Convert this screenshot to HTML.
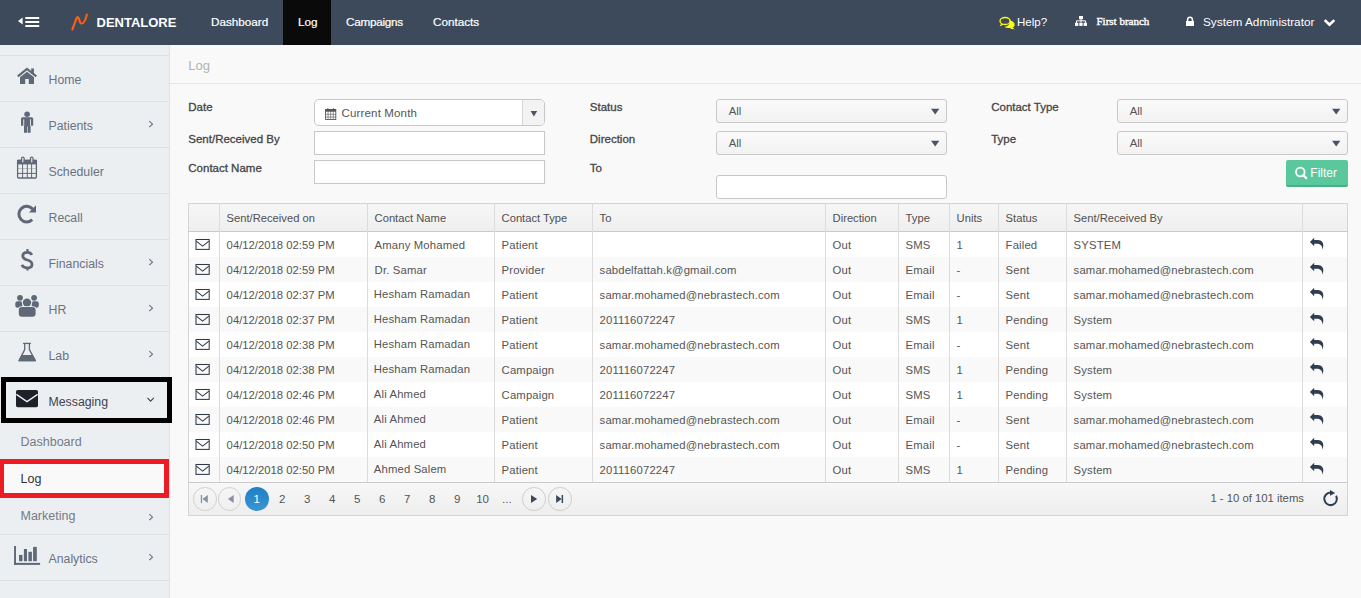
<!DOCTYPE html>
<html><head><meta charset="utf-8"><style>
html,body{margin:0;padding:0;}
body{width:1361px;height:598px;overflow:hidden;position:relative;background:#f9f9f9;font-family:"Liberation Sans",sans-serif;}
.t{position:absolute;white-space:nowrap;line-height:20px;}
svg{position:absolute;overflow:visible}
</style></head><body>
<div style="position:absolute;left:0px;top:0px;width:1361px;height:45px;background:#3d4a5c"></div>
<div style="position:absolute;left:283px;top:0px;width:48px;height:45px;background:#0a0a0a"></div>
<div class="t" style="left:211px;top:12.45px;font-size:11.7px;color:#ffffff;-webkit-text-stroke:0.2px #ffffff;">Dashboard</div>
<div class="t" style="left:298px;top:12.45px;font-size:11.7px;color:#ffffff;-webkit-text-stroke:0.2px #ffffff;">Log</div>
<div class="t" style="left:346px;top:12.45px;font-size:11.7px;color:#ffffff;letter-spacing:-0.25px;-webkit-text-stroke:0.2px #ffffff;">Campaigns</div>
<div class="t" style="left:433px;top:12.45px;font-size:11.7px;color:#ffffff;-webkit-text-stroke:0.2px #ffffff;">Contacts</div>
<div class="t" style="left:96.5px;top:12.50px;font-size:13px;color:#ffffff;font-weight:700;">DENTALORE</div>
<div class="t" style="left:1017px;top:11.62px;font-size:11.5px;color:#ffffff;">Help?</div>
<div class="t" style="left:1096.5px;top:11.29px;font-size:11px;color:#ffffff;font-family:'Liberation Serif',serif;-webkit-text-stroke:0.4px #ffffff;">First branch</div>
<div class="t" style="left:1203px;top:12.41px;font-size:11.8px;color:#ffffff;">System Administrator</div>
<div style="position:absolute;left:0px;top:45px;width:169px;height:553px;background:#eceff1"></div>
<div style="position:absolute;left:170px;top:45px;width:1191px;height:553px;background:#f9f9f9"></div>
<div style="position:absolute;left:169px;top:45px;width:1px;height:553px;background:#dfe3e6"></div>
<div style="position:absolute;left:0px;top:55px;width:169px;height:1px;background:#dde1e4"></div>
<div style="position:absolute;left:0px;top:101px;width:169px;height:1px;background:#dde1e4"></div>
<div style="position:absolute;left:0px;top:147px;width:169px;height:1px;background:#dde1e4"></div>
<div style="position:absolute;left:0px;top:193px;width:169px;height:1px;background:#dde1e4"></div>
<div style="position:absolute;left:0px;top:239px;width:169px;height:1px;background:#dde1e4"></div>
<div style="position:absolute;left:0px;top:285px;width:169px;height:1px;background:#dde1e4"></div>
<div style="position:absolute;left:0px;top:331px;width:169px;height:1px;background:#dde1e4"></div>
<div style="position:absolute;left:0px;top:377px;width:169px;height:1px;background:#dde1e4"></div>
<div style="position:absolute;left:0px;top:534px;width:169px;height:1px;background:#dde1e4"></div>
<div style="position:absolute;left:0px;top:580px;width:169px;height:1px;background:#dde1e4"></div>
<div class="t" style="left:48.5px;top:69.74px;font-size:12.3px;color:#6a7382;">Home</div>
<div class="t" style="left:48.5px;top:115.74px;font-size:12.3px;color:#6a7382;">Patients</div>
<div class="t" style="left:48.5px;top:161.74px;font-size:12.3px;color:#6a7382;">Scheduler</div>
<div class="t" style="left:48.5px;top:207.74px;font-size:12.3px;color:#6a7382;">Recall</div>
<div class="t" style="left:48.5px;top:253.74px;font-size:12.3px;color:#6a7382;">Financials</div>
<div class="t" style="left:48.5px;top:299.74px;font-size:12.3px;color:#6a7382;">HR</div>
<div class="t" style="left:48.5px;top:345.74px;font-size:12.3px;color:#6a7382;">Lab</div>
<div class="t" style="left:48.5px;top:391.74px;font-size:12.3px;color:#3d4250;">Messaging</div>
<div class="t" style="left:20.5px;top:431.67px;font-size:12.5px;color:#747b87;">Dashboard</div>
<div style="position:absolute;left:0px;top:459px;width:169px;height:39px;background:#f9f9f9"></div>
<div class="t" style="left:20.5px;top:468.67px;font-size:12.5px;color:#333333;">Log</div>
<div class="t" style="left:20.5px;top:505.67px;font-size:12.5px;color:#747b87;">Marketing</div>
<div class="t" style="left:48.5px;top:548.74px;font-size:12.3px;color:#6a7382;">Analytics</div>
<div style="position:absolute;left:1px;top:377px;width:171px;height:46px;box-sizing:border-box;border:5px solid #000"></div>
<div style="position:absolute;left:0px;top:459px;width:169px;height:39px;box-sizing:border-box;border:5px solid #ec1b24;border-left-width:4px"></div>
<div class="t" style="left:188.3px;top:55.50px;font-size:13px;color:#b3b3b3;">Log</div>
<div style="position:absolute;left:170px;top:83px;width:1191px;height:1px;background:#e6e6e6"></div>
<div class="t" style="left:188.3px;top:97.02px;font-size:11.5px;color:#454545;-webkit-text-stroke:0.3px #454545;">Date</div>
<div class="t" style="left:188.3px;top:129.02px;font-size:11.5px;color:#454545;-webkit-text-stroke:0.3px #454545;">Sent/Received By</div>
<div class="t" style="left:188.3px;top:158.02px;font-size:11.5px;color:#454545;-webkit-text-stroke:0.3px #454545;">Contact Name</div>
<div class="t" style="left:589.8px;top:97.02px;font-size:11.5px;color:#454545;-webkit-text-stroke:0.3px #454545;">Status</div>
<div class="t" style="left:589.8px;top:129.02px;font-size:11.5px;color:#454545;-webkit-text-stroke:0.3px #454545;">Direction</div>
<div class="t" style="left:589.8px;top:158.02px;font-size:11.5px;color:#454545;-webkit-text-stroke:0.3px #454545;">To</div>
<div class="t" style="left:991.2px;top:97.02px;font-size:11.5px;color:#454545;-webkit-text-stroke:0.3px #454545;">Contact Type</div>
<div class="t" style="left:991.2px;top:129.02px;font-size:11.5px;color:#454545;-webkit-text-stroke:0.3px #454545;">Type</div>
<div style="position:absolute;left:314px;top:99px;width:231px;height:27px;box-sizing:border-box;border:1px solid #c8c8c8;border-radius:5px;background:#fff"></div>
<div style="position:absolute;left:522px;top:100px;width:21px;height:25px;border-left:1px solid #d6d6d6;background:#f3f3f3;border-radius:0 4px 4px 0"></div>
<div class="t" style="left:341.6px;top:103.22px;font-size:11.5px;color:#555;letter-spacing:0.15px;">Current Month</div>
<div style="position:absolute;left:314px;top:131px;width:231px;height:24px;box-sizing:border-box;border:1px solid #c8c8c8;background:#fff"></div>
<div style="position:absolute;left:314px;top:160px;width:231px;height:24px;box-sizing:border-box;border:1px solid #c8c8c8;background:#fff"></div>
<div style="position:absolute;left:716px;top:99px;width:231px;height:24px;box-sizing:border-box;border:1px solid #c8c8c8;border-radius:3px;background:linear-gradient(#fafafa,#f2f2f2)"></div>
<div class="t" style="left:728.8px;top:100.78px;font-size:11.3px;color:#555;">All</div>
<div style="position:absolute;left:716px;top:131px;width:231px;height:24px;box-sizing:border-box;border:1px solid #c8c8c8;border-radius:3px;background:linear-gradient(#fafafa,#f2f2f2)"></div>
<div class="t" style="left:728.8px;top:132.78px;font-size:11.3px;color:#555;">All</div>
<div style="position:absolute;left:1117px;top:99px;width:231px;height:24px;box-sizing:border-box;border:1px solid #c8c8c8;border-radius:3px;background:linear-gradient(#fafafa,#f2f2f2)"></div>
<div class="t" style="left:1129.8px;top:100.78px;font-size:11.3px;color:#555;">All</div>
<div style="position:absolute;left:1117px;top:131px;width:231px;height:24px;box-sizing:border-box;border:1px solid #c8c8c8;border-radius:3px;background:linear-gradient(#fafafa,#f2f2f2)"></div>
<div class="t" style="left:1129.8px;top:132.78px;font-size:11.3px;color:#555;">All</div>
<div style="position:absolute;left:716px;top:175px;width:231px;height:24px;box-sizing:border-box;border:1px solid #c8c8c8;border-radius:3px;background:#fff"></div>
<div style="position:absolute;left:1286px;top:160px;width:62px;height:27px;box-sizing:border-box;background:#5bc79c;border-bottom:2px solid #47b186;border-radius:2px"></div>
<div class="t" style="left:1310.3px;top:163.24px;font-size:12px;color:#fff;">Filter</div>
<div style="position:absolute;left:188px;top:203px;width:1160px;height:313px;box-sizing:border-box;border:1px solid #d5d5d5;background:#fff"></div>
<div style="position:absolute;left:189px;top:204px;width:1158px;height:27px;background:linear-gradient(#f6f6f6,#efefef)"></div>
<div style="position:absolute;left:188px;top:231px;width:1160px;height:1px;background:#c9c9ce"></div>
<div style="position:absolute;left:189px;top:257px;width:1158px;height:25px;background:#f9f9f9"></div>
<div style="position:absolute;left:189px;top:307px;width:1158px;height:25px;background:#f9f9f9"></div>
<div style="position:absolute;left:189px;top:357px;width:1158px;height:25px;background:#f9f9f9"></div>
<div style="position:absolute;left:189px;top:407px;width:1158px;height:25px;background:#f9f9f9"></div>
<div style="position:absolute;left:189px;top:457px;width:1158px;height:25px;background:#f9f9f9"></div>
<div style="position:absolute;left:219px;top:204px;width:1px;height:278px;background:#dcdcdc"></div>
<div style="position:absolute;left:367px;top:204px;width:1px;height:278px;background:#dcdcdc"></div>
<div style="position:absolute;left:494px;top:204px;width:1px;height:278px;background:#dcdcdc"></div>
<div style="position:absolute;left:592px;top:204px;width:1px;height:278px;background:#dcdcdc"></div>
<div style="position:absolute;left:825px;top:204px;width:1px;height:278px;background:#dcdcdc"></div>
<div style="position:absolute;left:898px;top:204px;width:1px;height:278px;background:#dcdcdc"></div>
<div style="position:absolute;left:949px;top:204px;width:1px;height:278px;background:#dcdcdc"></div>
<div style="position:absolute;left:998px;top:204px;width:1px;height:278px;background:#dcdcdc"></div>
<div style="position:absolute;left:1066px;top:204px;width:1px;height:278px;background:#dcdcdc"></div>
<div style="position:absolute;left:1302px;top:204px;width:1px;height:278px;background:#dcdcdc"></div>
<div class="t" style="left:226.6px;top:208.12px;font-size:11.2px;color:#505050;">Sent/Received on</div>
<div class="t" style="left:374.6px;top:208.12px;font-size:11.2px;color:#505050;">Contact Name</div>
<div class="t" style="left:501.6px;top:208.12px;font-size:11.2px;color:#505050;">Contact Type</div>
<div class="t" style="left:599.6px;top:208.12px;font-size:11.2px;color:#505050;">To</div>
<div class="t" style="left:832.6px;top:208.12px;font-size:11.2px;color:#505050;">Direction</div>
<div class="t" style="left:905.6px;top:208.12px;font-size:11.2px;color:#505050;">Type</div>
<div class="t" style="left:956.6px;top:208.12px;font-size:11.2px;color:#505050;">Units</div>
<div class="t" style="left:1005.6px;top:208.12px;font-size:11.2px;color:#505050;">Status</div>
<div class="t" style="left:1073.6px;top:208.12px;font-size:11.2px;color:#505050;">Sent/Received By</div>
<div class="t" style="left:226.6px;top:234.88px;font-size:11.3px;color:#555555;">04/12/2018 02:59 PM</div>
<div class="t" style="left:374.6px;top:234.88px;font-size:11.3px;color:#555555;letter-spacing:0.15px;">Amany Mohamed</div>
<div class="t" style="left:501.6px;top:234.88px;font-size:11.3px;color:#555555;letter-spacing:0.15px;">Patient</div>
<div class="t" style="left:832.6px;top:234.88px;font-size:11.3px;color:#555555;letter-spacing:0.15px;">Out</div>
<div class="t" style="left:905.6px;top:234.88px;font-size:11.3px;color:#555555;letter-spacing:0.15px;">SMS</div>
<div class="t" style="left:956.6px;top:234.88px;font-size:11.3px;color:#555555;letter-spacing:0.15px;">1</div>
<div class="t" style="left:1005.6px;top:234.88px;font-size:11.3px;color:#555555;letter-spacing:0.15px;">Failed</div>
<div class="t" style="left:1073.6px;top:234.88px;font-size:11.3px;color:#555555;letter-spacing:0.15px;">SYSTEM</div>
<div class="t" style="left:226.6px;top:259.88px;font-size:11.3px;color:#555555;">04/12/2018 02:59 PM</div>
<div class="t" style="left:374.6px;top:259.88px;font-size:11.3px;color:#555555;letter-spacing:0.15px;">Dr. Samar</div>
<div class="t" style="left:501.6px;top:259.88px;font-size:11.3px;color:#555555;letter-spacing:0.15px;">Provider</div>
<div class="t" style="left:599.6px;top:259.88px;font-size:11.3px;color:#555555;letter-spacing:0.15px;">sabdelfattah.k@gmail.com</div>
<div class="t" style="left:832.6px;top:259.88px;font-size:11.3px;color:#555555;letter-spacing:0.15px;">Out</div>
<div class="t" style="left:905.6px;top:259.88px;font-size:11.3px;color:#555555;letter-spacing:0.15px;">Email</div>
<div class="t" style="left:956.6px;top:259.88px;font-size:11.3px;color:#555555;letter-spacing:0.15px;">-</div>
<div class="t" style="left:1005.6px;top:259.88px;font-size:11.3px;color:#555555;letter-spacing:0.15px;">Sent</div>
<div class="t" style="left:1073.6px;top:259.88px;font-size:11.3px;color:#555555;letter-spacing:0.15px;">samar.mohamed@nebrastech.com</div>
<div class="t" style="left:226.6px;top:284.88px;font-size:11.3px;color:#555555;">04/12/2018 02:37 PM</div>
<div class="t" style="left:373.8px;top:284.18px;font-size:11.3px;color:#555555;letter-spacing:0.15px;">Hesham Ramadan</div>
<div class="t" style="left:501.6px;top:284.88px;font-size:11.3px;color:#555555;letter-spacing:0.15px;">Patient</div>
<div class="t" style="left:599.6px;top:284.88px;font-size:11.3px;color:#555555;letter-spacing:0.15px;">samar.mohamed@nebrastech.com</div>
<div class="t" style="left:832.6px;top:284.88px;font-size:11.3px;color:#555555;letter-spacing:0.15px;">Out</div>
<div class="t" style="left:905.6px;top:284.88px;font-size:11.3px;color:#555555;letter-spacing:0.15px;">Email</div>
<div class="t" style="left:956.6px;top:284.88px;font-size:11.3px;color:#555555;letter-spacing:0.15px;">-</div>
<div class="t" style="left:1005.6px;top:284.88px;font-size:11.3px;color:#555555;letter-spacing:0.15px;">Sent</div>
<div class="t" style="left:1073.6px;top:284.88px;font-size:11.3px;color:#555555;letter-spacing:0.15px;">samar.mohamed@nebrastech.com</div>
<div class="t" style="left:226.6px;top:309.88px;font-size:11.3px;color:#555555;">04/12/2018 02:37 PM</div>
<div class="t" style="left:373.8px;top:309.18px;font-size:11.3px;color:#555555;letter-spacing:0.15px;">Hesham Ramadan</div>
<div class="t" style="left:501.6px;top:309.88px;font-size:11.3px;color:#555555;letter-spacing:0.15px;">Patient</div>
<div class="t" style="left:599.6px;top:309.88px;font-size:11.3px;color:#555555;letter-spacing:0.15px;">201116072247</div>
<div class="t" style="left:832.6px;top:309.88px;font-size:11.3px;color:#555555;letter-spacing:0.15px;">Out</div>
<div class="t" style="left:905.6px;top:309.88px;font-size:11.3px;color:#555555;letter-spacing:0.15px;">SMS</div>
<div class="t" style="left:956.6px;top:309.88px;font-size:11.3px;color:#555555;letter-spacing:0.15px;">1</div>
<div class="t" style="left:1005.6px;top:309.88px;font-size:11.3px;color:#555555;letter-spacing:0.15px;">Pending</div>
<div class="t" style="left:1073.6px;top:309.88px;font-size:11.3px;color:#555555;letter-spacing:0.15px;">System</div>
<div class="t" style="left:226.6px;top:334.88px;font-size:11.3px;color:#555555;">04/12/2018 02:38 PM</div>
<div class="t" style="left:373.8px;top:334.18px;font-size:11.3px;color:#555555;letter-spacing:0.15px;">Hesham Ramadan</div>
<div class="t" style="left:501.6px;top:334.88px;font-size:11.3px;color:#555555;letter-spacing:0.15px;">Patient</div>
<div class="t" style="left:599.6px;top:334.88px;font-size:11.3px;color:#555555;letter-spacing:0.15px;">samar.mohamed@nebrastech.com</div>
<div class="t" style="left:832.6px;top:334.88px;font-size:11.3px;color:#555555;letter-spacing:0.15px;">Out</div>
<div class="t" style="left:905.6px;top:334.88px;font-size:11.3px;color:#555555;letter-spacing:0.15px;">Email</div>
<div class="t" style="left:956.6px;top:334.88px;font-size:11.3px;color:#555555;letter-spacing:0.15px;">-</div>
<div class="t" style="left:1005.6px;top:334.88px;font-size:11.3px;color:#555555;letter-spacing:0.15px;">Sent</div>
<div class="t" style="left:1073.6px;top:334.88px;font-size:11.3px;color:#555555;letter-spacing:0.15px;">samar.mohamed@nebrastech.com</div>
<div class="t" style="left:226.6px;top:359.88px;font-size:11.3px;color:#555555;">04/12/2018 02:38 PM</div>
<div class="t" style="left:373.8px;top:359.18px;font-size:11.3px;color:#555555;letter-spacing:0.15px;">Hesham Ramadan</div>
<div class="t" style="left:501.6px;top:359.88px;font-size:11.3px;color:#555555;letter-spacing:0.15px;">Campaign</div>
<div class="t" style="left:599.6px;top:359.88px;font-size:11.3px;color:#555555;letter-spacing:0.15px;">201116072247</div>
<div class="t" style="left:832.6px;top:359.88px;font-size:11.3px;color:#555555;letter-spacing:0.15px;">Out</div>
<div class="t" style="left:905.6px;top:359.88px;font-size:11.3px;color:#555555;letter-spacing:0.15px;">SMS</div>
<div class="t" style="left:956.6px;top:359.88px;font-size:11.3px;color:#555555;letter-spacing:0.15px;">1</div>
<div class="t" style="left:1005.6px;top:359.88px;font-size:11.3px;color:#555555;letter-spacing:0.15px;">Pending</div>
<div class="t" style="left:1073.6px;top:359.88px;font-size:11.3px;color:#555555;letter-spacing:0.15px;">System</div>
<div class="t" style="left:226.6px;top:384.88px;font-size:11.3px;color:#555555;">04/12/2018 02:46 PM</div>
<div class="t" style="left:373.8px;top:384.18px;font-size:11.3px;color:#555555;letter-spacing:0.15px;">Ali Ahmed</div>
<div class="t" style="left:501.6px;top:384.88px;font-size:11.3px;color:#555555;letter-spacing:0.15px;">Campaign</div>
<div class="t" style="left:599.6px;top:384.88px;font-size:11.3px;color:#555555;letter-spacing:0.15px;">201116072247</div>
<div class="t" style="left:832.6px;top:384.88px;font-size:11.3px;color:#555555;letter-spacing:0.15px;">Out</div>
<div class="t" style="left:905.6px;top:384.88px;font-size:11.3px;color:#555555;letter-spacing:0.15px;">SMS</div>
<div class="t" style="left:956.6px;top:384.88px;font-size:11.3px;color:#555555;letter-spacing:0.15px;">1</div>
<div class="t" style="left:1005.6px;top:384.88px;font-size:11.3px;color:#555555;letter-spacing:0.15px;">Pending</div>
<div class="t" style="left:1073.6px;top:384.88px;font-size:11.3px;color:#555555;letter-spacing:0.15px;">System</div>
<div class="t" style="left:226.6px;top:409.88px;font-size:11.3px;color:#555555;">04/12/2018 02:46 PM</div>
<div class="t" style="left:373.8px;top:409.18px;font-size:11.3px;color:#555555;letter-spacing:0.15px;">Ali Ahmed</div>
<div class="t" style="left:501.6px;top:409.88px;font-size:11.3px;color:#555555;letter-spacing:0.15px;">Patient</div>
<div class="t" style="left:599.6px;top:409.88px;font-size:11.3px;color:#555555;letter-spacing:0.15px;">samar.mohamed@nebrastech.com</div>
<div class="t" style="left:832.6px;top:409.88px;font-size:11.3px;color:#555555;letter-spacing:0.15px;">Out</div>
<div class="t" style="left:905.6px;top:409.88px;font-size:11.3px;color:#555555;letter-spacing:0.15px;">Email</div>
<div class="t" style="left:956.6px;top:409.88px;font-size:11.3px;color:#555555;letter-spacing:0.15px;">-</div>
<div class="t" style="left:1005.6px;top:409.88px;font-size:11.3px;color:#555555;letter-spacing:0.15px;">Sent</div>
<div class="t" style="left:1073.6px;top:409.88px;font-size:11.3px;color:#555555;letter-spacing:0.15px;">samar.mohamed@nebrastech.com</div>
<div class="t" style="left:226.6px;top:434.88px;font-size:11.3px;color:#555555;">04/12/2018 02:50 PM</div>
<div class="t" style="left:373.8px;top:434.18px;font-size:11.3px;color:#555555;letter-spacing:0.15px;">Ali Ahmed</div>
<div class="t" style="left:501.6px;top:434.88px;font-size:11.3px;color:#555555;letter-spacing:0.15px;">Patient</div>
<div class="t" style="left:599.6px;top:434.88px;font-size:11.3px;color:#555555;letter-spacing:0.15px;">samar.mohamed@nebrastech.com</div>
<div class="t" style="left:832.6px;top:434.88px;font-size:11.3px;color:#555555;letter-spacing:0.15px;">Out</div>
<div class="t" style="left:905.6px;top:434.88px;font-size:11.3px;color:#555555;letter-spacing:0.15px;">Email</div>
<div class="t" style="left:956.6px;top:434.88px;font-size:11.3px;color:#555555;letter-spacing:0.15px;">-</div>
<div class="t" style="left:1005.6px;top:434.88px;font-size:11.3px;color:#555555;letter-spacing:0.15px;">Sent</div>
<div class="t" style="left:1073.6px;top:434.88px;font-size:11.3px;color:#555555;letter-spacing:0.15px;">samar.mohamed@nebrastech.com</div>
<div class="t" style="left:226.6px;top:459.88px;font-size:11.3px;color:#555555;">04/12/2018 02:50 PM</div>
<div class="t" style="left:373.8px;top:459.18px;font-size:11.3px;color:#555555;letter-spacing:0.15px;">Ahmed Salem</div>
<div class="t" style="left:501.6px;top:459.88px;font-size:11.3px;color:#555555;letter-spacing:0.15px;">Patient</div>
<div class="t" style="left:599.6px;top:459.88px;font-size:11.3px;color:#555555;letter-spacing:0.15px;">201116072247</div>
<div class="t" style="left:832.6px;top:459.88px;font-size:11.3px;color:#555555;letter-spacing:0.15px;">Out</div>
<div class="t" style="left:905.6px;top:459.88px;font-size:11.3px;color:#555555;letter-spacing:0.15px;">SMS</div>
<div class="t" style="left:956.6px;top:459.88px;font-size:11.3px;color:#555555;letter-spacing:0.15px;">1</div>
<div class="t" style="left:1005.6px;top:459.88px;font-size:11.3px;color:#555555;letter-spacing:0.15px;">Pending</div>
<div class="t" style="left:1073.6px;top:459.88px;font-size:11.3px;color:#555555;letter-spacing:0.15px;">System</div>
<div style="position:absolute;left:189px;top:483px;width:1158px;height:32px;background:linear-gradient(#f7f7f7,#eeeeee)"></div>
<div style="position:absolute;left:188px;top:482px;width:1160px;height:1px;background:#c9c9ce"></div>
<div style="position:absolute;left:193.3px;top:487.3px;width:23.4px;height:23.4px;box-sizing:border-box;border:1px solid #d0d0d0;border-radius:50%"></div>
<div style="position:absolute;left:218.10000000000002px;top:487.3px;width:23.4px;height:23.4px;box-sizing:border-box;border:1px solid #d0d0d0;border-radius:50%"></div>
<div style="position:absolute;left:522.3px;top:487.3px;width:23.4px;height:23.4px;box-sizing:border-box;border:1px solid #cccccc;border-radius:50%"></div>
<div style="position:absolute;left:548.3px;top:487.3px;width:23.4px;height:23.4px;box-sizing:border-box;border:1px solid #cccccc;border-radius:50%"></div>
<div style="position:absolute;left:245px;top:487px;width:24px;height:24px;border-radius:50%;background:linear-gradient(#1f7fc4,#3a95d3)"></div>
<div class="t" style="left:253.5px;top:489.02px;font-size:11.5px;color:#fff;">1</div>
<div class="t" style="left:279.0px;top:489.02px;font-size:11.5px;color:#555;">2</div>
<div class="t" style="left:304.0px;top:489.02px;font-size:11.5px;color:#555;">3</div>
<div class="t" style="left:329.0px;top:489.02px;font-size:11.5px;color:#555;">4</div>
<div class="t" style="left:354.0px;top:489.02px;font-size:11.5px;color:#555;">5</div>
<div class="t" style="left:379.0px;top:489.02px;font-size:11.5px;color:#555;">6</div>
<div class="t" style="left:404.0px;top:489.02px;font-size:11.5px;color:#555;">7</div>
<div class="t" style="left:429.0px;top:489.02px;font-size:11.5px;color:#555;">8</div>
<div class="t" style="left:454.0px;top:489.02px;font-size:11.5px;color:#555;">9</div>
<div class="t" style="left:476.2px;top:489.02px;font-size:11.5px;color:#555;">10</div>
<div class="t" style="left:502px;top:489.02px;font-size:11.5px;color:#555;">...</div>
<div class="t" style="left:1210.4px;top:488.08px;font-size:11.3px;color:#555;">1 - 10 of 101 items</div>
<svg style="left:0;top:0" width="1361" height="598" viewBox="0 0 1361 598"><polygon points="18,21 22.6,17.6 22.6,24.4" fill="#fff"/><rect x="25.3" y="17" width="13.9" height="2" fill="#fff"/><rect x="25.3" y="21" width="13.9" height="2" fill="#fff"/><rect x="25.3" y="25" width="13.9" height="2" fill="#fff"/><path d="M72.3,29.6 L76.6,18.2 Q77.6,15.9 78.6,18.2 L80.2,22.4 Q81.2,24.2 83,23 Q85.5,21 86.8,14.6" fill="none" stroke="#ff5f10" stroke-width="2.1" stroke-linecap="round" stroke-linejoin="round"/><path d="M1009.3,20.3 Q1014.8,21.5 1014.6,25 Q1014.4,27 1012.6,27.6 L1014.6,29.3 Q1011,29.2 1009.8,28 Q1006.5,28.4 1004.5,27 Q1008.5,26.2 1009.6,23.8 Z" fill="#ffff00"/><ellipse cx="1005.1" cy="21" rx="5.1" ry="3.5" fill="none" stroke="#ffff00" stroke-width="1.3"/><path d="M1001.2,23.6 L999.6,26.6 L1003.6,24.6 Z" fill="#ffff00"/><rect x="1079" y="16" width="4" height="3.2" fill="#fff"/><path d="M1081,19 V22.5 M1076.5,22.8 V20.8 H1085.5 V22.8" fill="none" stroke="#fff" stroke-width="1"/><rect x="1075" y="22.7" width="3.3" height="3.2" fill="#fff"/><rect x="1079.3" y="22.7" width="3.3" height="3.2" fill="#fff"/><rect x="1083.6" y="22.7" width="3.4" height="3.2" fill="#fff"/><rect x="1186" y="21" width="8" height="5" fill="#fff"/><path d="M1187.6,21.5 V19.8 Q1187.6,17.2 1190,17.2 Q1192.4,17.2 1192.4,19.8 V21.5" fill="none" stroke="#fff" stroke-width="1.5"/><path d="M1325.6,21 L1329.5,24.8 L1333.4,21" fill="none" stroke="#fff" stroke-width="2.6" stroke-linecap="square"/><path d="M17.8,76.3 L27,69 L36.3,76.3" fill="none" stroke="#5f6877" stroke-width="2.2"/><rect x="31.2" y="68.4" width="2.7" height="5" fill="#5f6877"/><path d="M20,77.2 L27,71.8 L34,77.2 V84 H28.8 V78.9 H25.2 V84 H20 Z" fill="#5f6877"/><circle cx="27.1" cy="114.2" r="2.8" fill="#5f6877"/><path d="M22.6,117.2 H31.6 Q33.2,117.2 33.2,118.8 V125.8 H30.6 V132.8 H27.6 V126.5 H27 V132.8 H24 V125.8 H21 V118.8 Q21,117.2 22.6,117.2 Z" fill="#5f6877"/><rect x="23.3" y="119.3" width="0.9" height="6.6" fill="#eceff1"/><rect x="30" y="119.3" width="0.9" height="6.6" fill="#eceff1"/><rect x="17.6" y="160.4" width="18.8" height="17.6" rx="1" fill="none" stroke="#5f6877" stroke-width="1.3"/><rect x="17" y="159.8" width="20" height="4.6" fill="#5f6877"/><path d="M22.6,164 V178 M27.3,164 V178 M31.6,164 V178 M17,173.4 H37" stroke="#5f6877" stroke-width="1"/><path d="M17,168.6 H37" stroke="#5f6877" stroke-width="0.8" opacity="0.45"/><path d="M21.5,162.5 V158.8 Q21.5,157.2 22.85,157.2 Q24.2,157.2 24.2,158.8 V162.5 M30.4,162.5 V158.8 Q30.4,157.2 31.75,157.2 Q33.1,157.2 33.1,158.8 V162.5" fill="none" stroke="#5f6877" stroke-width="1.2"/><rect x="22.3" y="159.5" width="1.1" height="2.8" fill="#eceff1"/><rect x="31.2" y="159.5" width="1.1" height="2.8" fill="#eceff1"/><path d="M32.6,209 A7.8,7.8 0 1 0 32.2,219.6" fill="none" stroke="#5f6877" stroke-width="3"/><polygon points="36,205.3 36,212.6 28.8,212.6" fill="#5f6877"/><path d="M31.8,255 Q30.6,252.4 27.4,252.4 Q22.8,252.4 22.8,256 Q22.8,258.8 27.4,260 Q32,261.2 32,264.4 Q32,267.8 27.4,267.8 Q23.4,267.8 21.8,264.8" fill="none" stroke="#5f6877" stroke-width="2.8"/><path d="M27.5,249 V252.6 M27.5,267.4 V270.6" stroke="#5f6877" stroke-width="2.2"/><circle cx="20" cy="297.8" r="2.9" fill="#5f6877"/><circle cx="34.1" cy="297.8" r="2.9" fill="#5f6877"/><rect x="15.3" y="301.3" width="7.2" height="6.4" rx="2.3" fill="#5f6877"/><rect x="31.6" y="301.3" width="7.2" height="6.4" rx="2.3" fill="#5f6877"/><circle cx="27" cy="302.6" r="5.2" fill="#eceff1"/><circle cx="27" cy="302.6" r="4.2" fill="#5f6877"/><rect x="17.8" y="306.2" width="18.8" height="11.4" rx="4" fill="#eceff1"/><rect x="18.8" y="307.1" width="16.8" height="9.6" rx="3.2" fill="#5f6877"/><path d="M23.1,343.4 H30.9" stroke="#5f6877" stroke-width="1.3"/><path d="M24.7,344 V349.6 L19,360.6 H35.4 L29.4,349.6 V344" fill="none" stroke="#5f6877" stroke-width="1.3" stroke-linejoin="round"/><path d="M21.6,355 H32.6 L36,361.2 H18.4 Z" fill="#5f6877"/><rect x="16" y="389.9" width="22" height="17.3" rx="1.6" fill="#1e2128"/><path d="M16.4,394.4 L27,401.6 L37.6,394.4" fill="none" stroke="#eceff1" stroke-width="1.3"/><rect x="14.1" y="546" width="1.9" height="18.9" fill="#5f6877"/><rect x="14.1" y="562.9" width="26" height="2" fill="#5f6877"/><rect x="19" y="554.9" width="3.5" height="6.3" fill="#5f6877"/><rect x="23.9" y="549" width="3.1" height="12.2" fill="#5f6877"/><rect x="28.4" y="551.8" width="3.5" height="9.4" fill="#5f6877"/><rect x="33.1" y="546.9" width="3.7" height="14.3" fill="#5f6877"/><path d="M149.3,121.2 L152.5,124.2 L149.3,127.2" fill="none" stroke="#6a7382" stroke-width="1.1"/><path d="M149.3,259.2 L152.5,262.2 L149.3,265.2" fill="none" stroke="#6a7382" stroke-width="1.1"/><path d="M149.3,305.2 L152.5,308.2 L149.3,311.2" fill="none" stroke="#6a7382" stroke-width="1.1"/><path d="M149.3,351.2 L152.5,354.2 L149.3,357.2" fill="none" stroke="#6a7382" stroke-width="1.1"/><path d="M149.3,514.2 L152.5,517.2 L149.3,520.2" fill="none" stroke="#6a7382" stroke-width="1.1"/><path d="M149.3,554.2 L152.5,557.2 L149.3,560.2" fill="none" stroke="#6a7382" stroke-width="1.1"/><path d="M147.4,397.9 L150.6,401.1 L153.8,397.9" fill="none" stroke="#3d4250" stroke-width="1.1"/><rect x="325.6" y="109.5" width="10.2" height="10" fill="none" stroke="#555" stroke-width="0.9"/><rect x="325.4" y="109.3" width="10.6" height="2.4" fill="#555"/><path d="M328.1,111 V119.6 M330.7,111 V119.6 M333.3,111 V119.6 M325.4,114.3 H336 M325.4,117 H336" stroke="#555" stroke-width="0.6"/><path d="M327.8,108.3 V110.5 M333.6,108.3 V110.5" stroke="#555" stroke-width="1.1"/><polygon points="530.6,111.1 537.2,111.1 533.9,116.5" fill="#4a5464"/><polygon points="931,108.8 939.4,108.8 935.2,114.39999999999999" fill="#4a5464"/><polygon points="931,140.8 939.4,140.8 935.2,146.4" fill="#4a5464"/><polygon points="1332,108.8 1340.4,108.8 1336.2,114.39999999999999" fill="#4a5464"/><polygon points="1332,140.8 1340.4,140.8 1336.2,146.4" fill="#4a5464"/><circle cx="1300.3" cy="172" r="4.3" fill="none" stroke="#fff" stroke-width="1.8"/><path d="M1303.4,175.2 L1306.2,178.1" stroke="#fff" stroke-width="2.3" stroke-linecap="round"/><rect x="196" y="239.5" width="13.2" height="9.9" fill="none" stroke="#2e3a4c" stroke-width="1.05"/><path d="M196.3,241.2 L202.6,246.2 L208.9,241.2" fill="none" stroke="#2e3a4c" stroke-width="1.05"/><path d="M1309.9,242 L1314.2,237.8 V240.1 H1318 Q1323.6,240.4 1323.3,246 L1322.7,249.7 Q1322,244.5 1318.3,243.8 H1314.2 V246.2 Z" fill="#2e3d50"/><rect x="196" y="264.5" width="13.2" height="9.9" fill="none" stroke="#2e3a4c" stroke-width="1.05"/><path d="M196.3,266.2 L202.6,271.2 L208.9,266.2" fill="none" stroke="#2e3a4c" stroke-width="1.05"/><path d="M1309.9,267 L1314.2,262.8 V265.1 H1318 Q1323.6,265.4 1323.3,271 L1322.7,274.7 Q1322,269.5 1318.3,268.8 H1314.2 V271.2 Z" fill="#2e3d50"/><rect x="196" y="289.5" width="13.2" height="9.9" fill="none" stroke="#2e3a4c" stroke-width="1.05"/><path d="M196.3,291.2 L202.6,296.2 L208.9,291.2" fill="none" stroke="#2e3a4c" stroke-width="1.05"/><path d="M1309.9,292 L1314.2,287.8 V290.1 H1318 Q1323.6,290.4 1323.3,296 L1322.7,299.7 Q1322,294.5 1318.3,293.8 H1314.2 V296.2 Z" fill="#2e3d50"/><rect x="196" y="314.5" width="13.2" height="9.9" fill="none" stroke="#2e3a4c" stroke-width="1.05"/><path d="M196.3,316.2 L202.6,321.2 L208.9,316.2" fill="none" stroke="#2e3a4c" stroke-width="1.05"/><path d="M1309.9,317 L1314.2,312.8 V315.1 H1318 Q1323.6,315.4 1323.3,321 L1322.7,324.7 Q1322,319.5 1318.3,318.8 H1314.2 V321.2 Z" fill="#2e3d50"/><rect x="196" y="339.5" width="13.2" height="9.9" fill="none" stroke="#2e3a4c" stroke-width="1.05"/><path d="M196.3,341.2 L202.6,346.2 L208.9,341.2" fill="none" stroke="#2e3a4c" stroke-width="1.05"/><path d="M1309.9,342 L1314.2,337.8 V340.1 H1318 Q1323.6,340.4 1323.3,346 L1322.7,349.7 Q1322,344.5 1318.3,343.8 H1314.2 V346.2 Z" fill="#2e3d50"/><rect x="196" y="364.5" width="13.2" height="9.9" fill="none" stroke="#2e3a4c" stroke-width="1.05"/><path d="M196.3,366.2 L202.6,371.2 L208.9,366.2" fill="none" stroke="#2e3a4c" stroke-width="1.05"/><path d="M1309.9,367 L1314.2,362.8 V365.1 H1318 Q1323.6,365.4 1323.3,371 L1322.7,374.7 Q1322,369.5 1318.3,368.8 H1314.2 V371.2 Z" fill="#2e3d50"/><rect x="196" y="389.5" width="13.2" height="9.9" fill="none" stroke="#2e3a4c" stroke-width="1.05"/><path d="M196.3,391.2 L202.6,396.2 L208.9,391.2" fill="none" stroke="#2e3a4c" stroke-width="1.05"/><path d="M1309.9,392 L1314.2,387.8 V390.1 H1318 Q1323.6,390.4 1323.3,396 L1322.7,399.7 Q1322,394.5 1318.3,393.8 H1314.2 V396.2 Z" fill="#2e3d50"/><rect x="196" y="414.5" width="13.2" height="9.9" fill="none" stroke="#2e3a4c" stroke-width="1.05"/><path d="M196.3,416.2 L202.6,421.2 L208.9,416.2" fill="none" stroke="#2e3a4c" stroke-width="1.05"/><path d="M1309.9,417 L1314.2,412.8 V415.1 H1318 Q1323.6,415.4 1323.3,421 L1322.7,424.7 Q1322,419.5 1318.3,418.8 H1314.2 V421.2 Z" fill="#2e3d50"/><rect x="196" y="439.5" width="13.2" height="9.9" fill="none" stroke="#2e3a4c" stroke-width="1.05"/><path d="M196.3,441.2 L202.6,446.2 L208.9,441.2" fill="none" stroke="#2e3a4c" stroke-width="1.05"/><path d="M1309.9,442 L1314.2,437.8 V440.1 H1318 Q1323.6,440.4 1323.3,446 L1322.7,449.7 Q1322,444.5 1318.3,443.8 H1314.2 V446.2 Z" fill="#2e3d50"/><rect x="196" y="464.5" width="13.2" height="9.9" fill="none" stroke="#2e3a4c" stroke-width="1.05"/><path d="M196.3,466.2 L202.6,471.2 L208.9,466.2" fill="none" stroke="#2e3a4c" stroke-width="1.05"/><path d="M1309.9,467 L1314.2,462.8 V465.1 H1318 Q1323.6,465.4 1323.3,471 L1322.7,474.7 Q1322,469.5 1318.3,468.8 H1314.2 V471.2 Z" fill="#2e3d50"/><rect x="200.8" y="495" width="1.3" height="8" fill="#8a929e"/><polygon points="202.4,499 207.8,495 207.8,503" fill="#8a929e"/><polygon points="227.9,499 233.7,495 233.7,503" fill="#8a929e"/><polygon points="537.2,499 531,495 531,503" fill="#3d4a5c"/><polygon points="561.6,499 556.1,495 556.1,503" fill="#3d4a5c"/><rect x="561.6" y="495" width="1.5" height="8" fill="#3d4a5c"/><path d="M1330.6,492.5 A6.3,6.3 0 1 0 1336.1,495.7" fill="none" stroke="#2e3d50" stroke-width="2"/><polygon points="1330,490 1330,495.8 1335.2,492.9" fill="#2e3d50"/></svg>
</body></html>
